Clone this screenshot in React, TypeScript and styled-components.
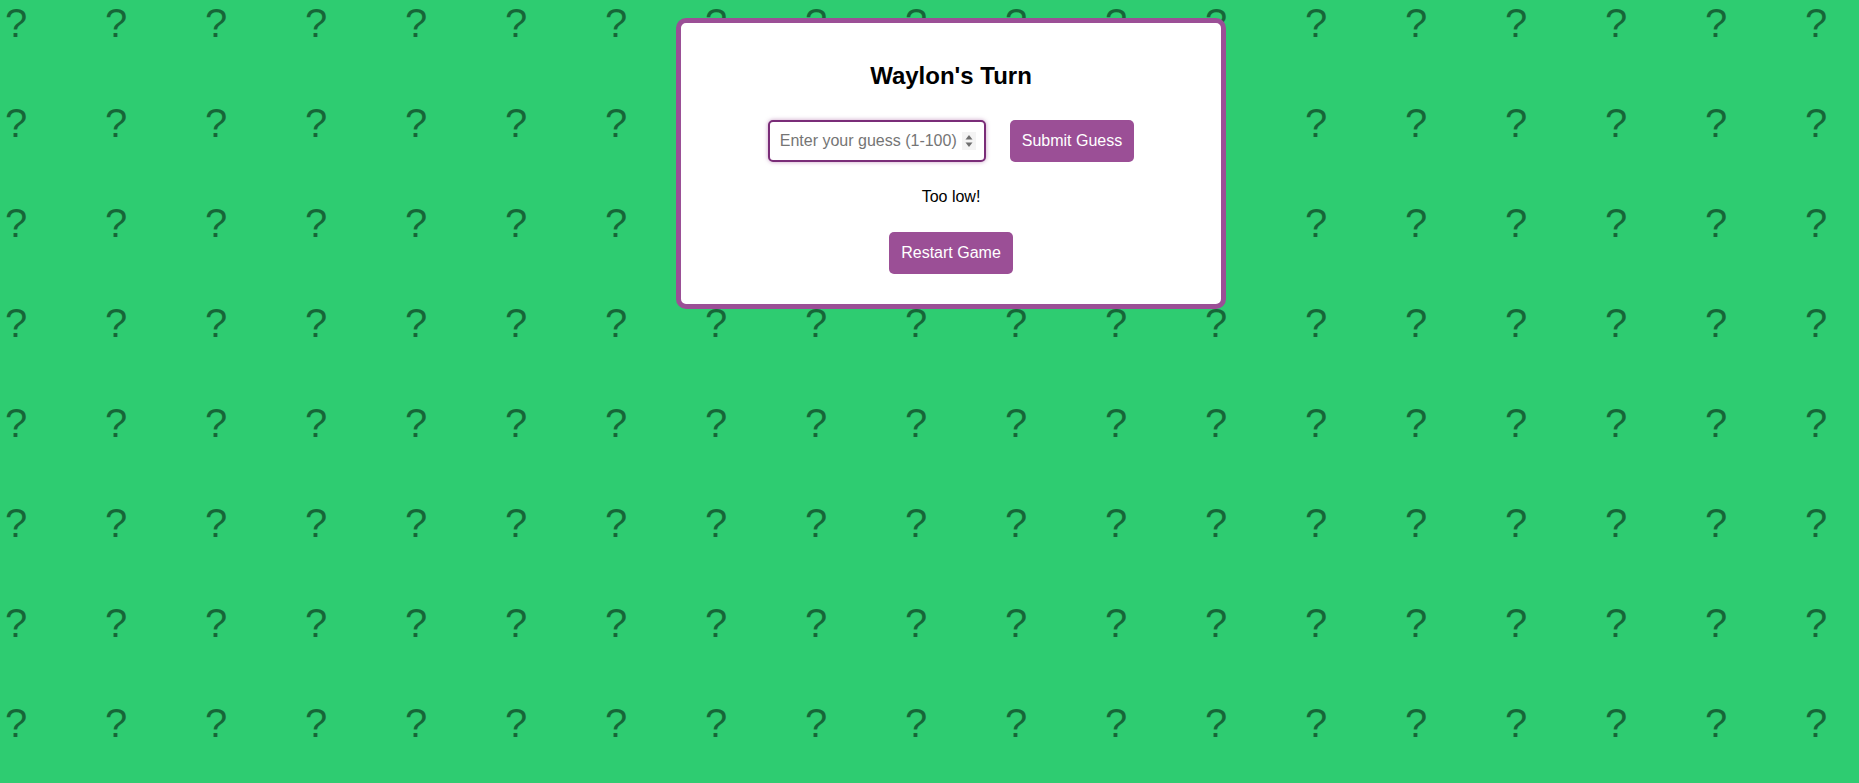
import React from "react";
import styled, { createGlobalStyle } from "styled-components";

const GlobalStyle = createGlobalStyle`
  html, body {
    margin: 0;
    padding: 0;
    overflow: hidden;
  }
  body {
    font-family: "Liberation Sans", Arial, sans-serif;
  }
`;

const Page = styled.div`
  display: grid;
  width: 100vw;
  height: 100vh;
  overflow: hidden;
  background: #2ecc71;
`;

const Pattern = styled.div`
  grid-area: 1 / 1;
  display: grid;
  grid-template-columns: repeat(19, 100px);
  grid-auto-rows: 100px;
  user-select: none;
`;

const Mark = styled.span`
  display: block;
  padding: 3px 0 0 5px;
  font-family: "Liberation Sans", Arial, sans-serif;
  font-size: 40px;
  line-height: 1;
  color: rgba(0, 0, 0, 0.52);
`;

const Card = styled.main`
  grid-area: 1 / 1;
  align-self: start;
  justify-self: start;
  margin: 17.5px 0 0 676px;
  width: 550px;
  box-sizing: border-box;
  padding: 20px;
  background: #ffffff;
  border: 5px solid #9b4f96;
  border-radius: 10px;
  text-align: center;
  position: relative;
  z-index: 1;
`;

const Title = styled.h2`
  margin: 0.83em 0;
  font-size: 24px;
  font-weight: bold;
  color: #000;
`;

const GuessRow = styled.div`
  display: flex;
  justify-content: center;
  gap: 24px;
  padding: 10px 0;
`;

const InputBox = styled.label`
  display: flex;
  align-items: center;
  gap: 3px;
  width: 218px;
  height: 42px;
  box-sizing: border-box;
  padding: 10px 8px 10px 10px;
  border: 2px solid #7a2d78;
  border-radius: 5px;
  box-shadow: 0 0 4px rgba(155, 79, 150, 0.55);
  background: #fff;
`;

const GuessInput = styled.input`
  flex: 1;
  min-width: 0;
  border: none;
  outline: none;
  padding: 0;
  margin: 0;
  font-family: "Liberation Sans", Arial, sans-serif;
  font-size: 16px;
  color: #000;
  background: transparent;
  caret-color: #000;

  &::placeholder {
    color: #757575;
  }
`;

const Spinner = styled.svg`
  flex: none;
  width: 14px;
  height: 18px;
  background: #f4f4f4;
`;

const ActionButton = styled.button`
  padding: 12px;
  border: none;
  border-radius: 5px;
  background: #9b4f96;
  color: #fff;
  font-family: "Liberation Sans", Arial, sans-serif;
  font-size: 16px;
  line-height: normal;
  cursor: pointer;
`;

const Message = styled.p`
  margin: 16px 0;
  font-size: 16px;
  color: #000;
`;

const RestartRow = styled.div`
  display: flex;
  justify-content: center;
  padding: 10px 0;
`;

export default function App() {
  const cells = Array.from({ length: 19 * 8 }, (_, i) => i);
  return (
    <>
      <GlobalStyle />
      <Page>
        <Pattern aria-hidden="true">
          {cells.map((i) => (
            <Mark key={i}>?</Mark>
          ))}
        </Pattern>
        <Card>
          <Title>Waylon's Turn</Title>
          <GuessRow>
            <InputBox>
              <GuessInput
                type="text"
                inputMode="numeric"
                placeholder="Enter your guess (1-100)"
                autoFocus
              />
              <Spinner viewBox="0 0 14 18">
                <path d="M7 3 L10.5 7.5 L3.5 7.5 Z" fill="#6f6f6f" />
                <path d="M7 15 L10.5 10.5 L3.5 10.5 Z" fill="#6f6f6f" />
              </Spinner>
            </InputBox>
            <ActionButton>Submit Guess</ActionButton>
          </GuessRow>
          <Message>Too low!</Message>
          <RestartRow>
            <ActionButton>Restart Game</ActionButton>
          </RestartRow>
        </Card>
      </Page>
    </>
  );
}
